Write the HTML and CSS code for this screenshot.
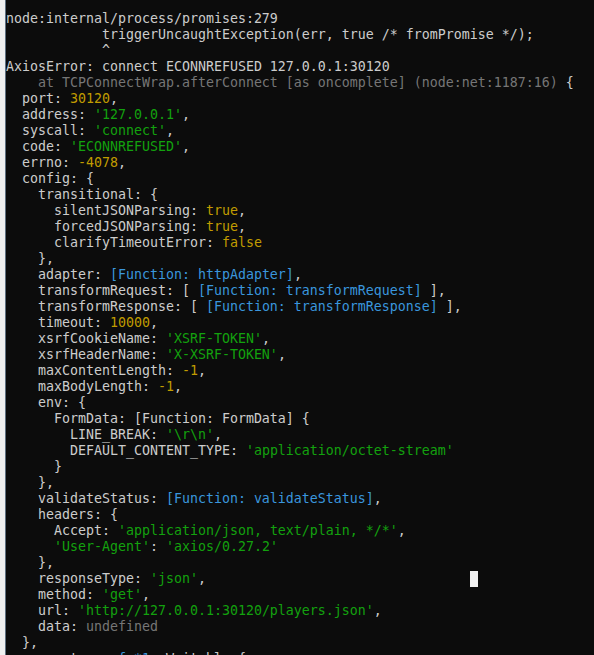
FILE: index.html
```html
<!DOCTYPE html>
<html>
<head>
<meta charset="utf-8">
<link rel="stylesheet" href="styles.css">
</head>
<body>
<div class="term"><pre class="out">node:internal/process/promises:279
            triggerUncaughtException(err, true /* fromPromise */);
            ^
AxiosError: connect ECONNREFUSED 127.0.0.1:30120
<span class="dim">    at TCPConnectWrap.afterConnect [as oncomplete] (node:net:1187:16)</span> {
  port: <span class="num">30120</span>,
  address: <span class="str">'127.0.0.1'</span>,
  syscall: <span class="str">'connect'</span>,
  code: <span class="str">'ECONNREFUSED'</span>,
  errno: <span class="num">-4078</span>,
  config: {
    transitional: {
      silentJSONParsing: <span class="num">true</span>,
      forcedJSONParsing: <span class="num">true</span>,
      clarifyTimeoutError: <span class="num">false</span>
    },
    adapter: <span class="fn">[Function: httpAdapter]</span>,
    transformRequest: [ <span class="fn">[Function: transformRequest]</span> ],
    transformResponse: [ <span class="fn">[Function: transformResponse]</span> ],
    timeout: <span class="num">10000</span>,
    xsrfCookieName: <span class="str">'XSRF-TOKEN'</span>,
    xsrfHeaderName: <span class="str">'X-XSRF-TOKEN'</span>,
    maxContentLength: <span class="num">-1</span>,
    maxBodyLength: <span class="num">-1</span>,
    env: {
      FormData: [Function: FormData] {
        LINE_BREAK: <span class="str">'\r\n'</span>,
        DEFAULT_CONTENT_TYPE: <span class="str">'application/octet-stream'</span>
      }
    },
    validateStatus: <span class="fn">[Function: validateStatus]</span>,
    headers: {
      Accept: <span class="str">'application/json, text/plain, */*'</span>,
      <span class="str">'User-Agent'</span>: <span class="str">'axios/0.27.2'</span>
    },
    responseType: <span class="str">'json'</span>,                                 <span class="cursor"> </span>
    method: <span class="str">'get'</span>,
    url: <span class="str">'http://127.0.0.1:30120/players.json'</span>,
    data: <span class="dim">undefined</span>
  },
  request: <span class="fn">&lt;ref *1&gt;</span> Writable {
</pre></div>
</body>
</html>
```
FILE: styles.css
```css
html, body {
  margin: 0;
  padding: 0;
  background: #f0f0f0;
  height: 655px;
  overflow: hidden;
}

.term {
  margin-left: 5px;
  border-left: 1px solid #5f7080;
  background: #0c0c0c;
  height: 655px;
  overflow: hidden;
  box-sizing: border-box;
  padding-top: 11px;
}

.out {
  margin: 0;
  padding: 0;
  font-family: "DejaVu Sans Mono", monospace;
  font-size: 13.29px;
  line-height: 16px;
  color: #cccccc;
  white-space: pre;
}

.str { color: #13a10e; }
.num { color: #c19c00; }
.fn { color: #3a96dd; }
.dim { color: #767676; }

.cursor {
  background: #f2f2f2;
  display: inline-block;
  width: 8px;
  height: 16px;
  vertical-align: top;
}
```
